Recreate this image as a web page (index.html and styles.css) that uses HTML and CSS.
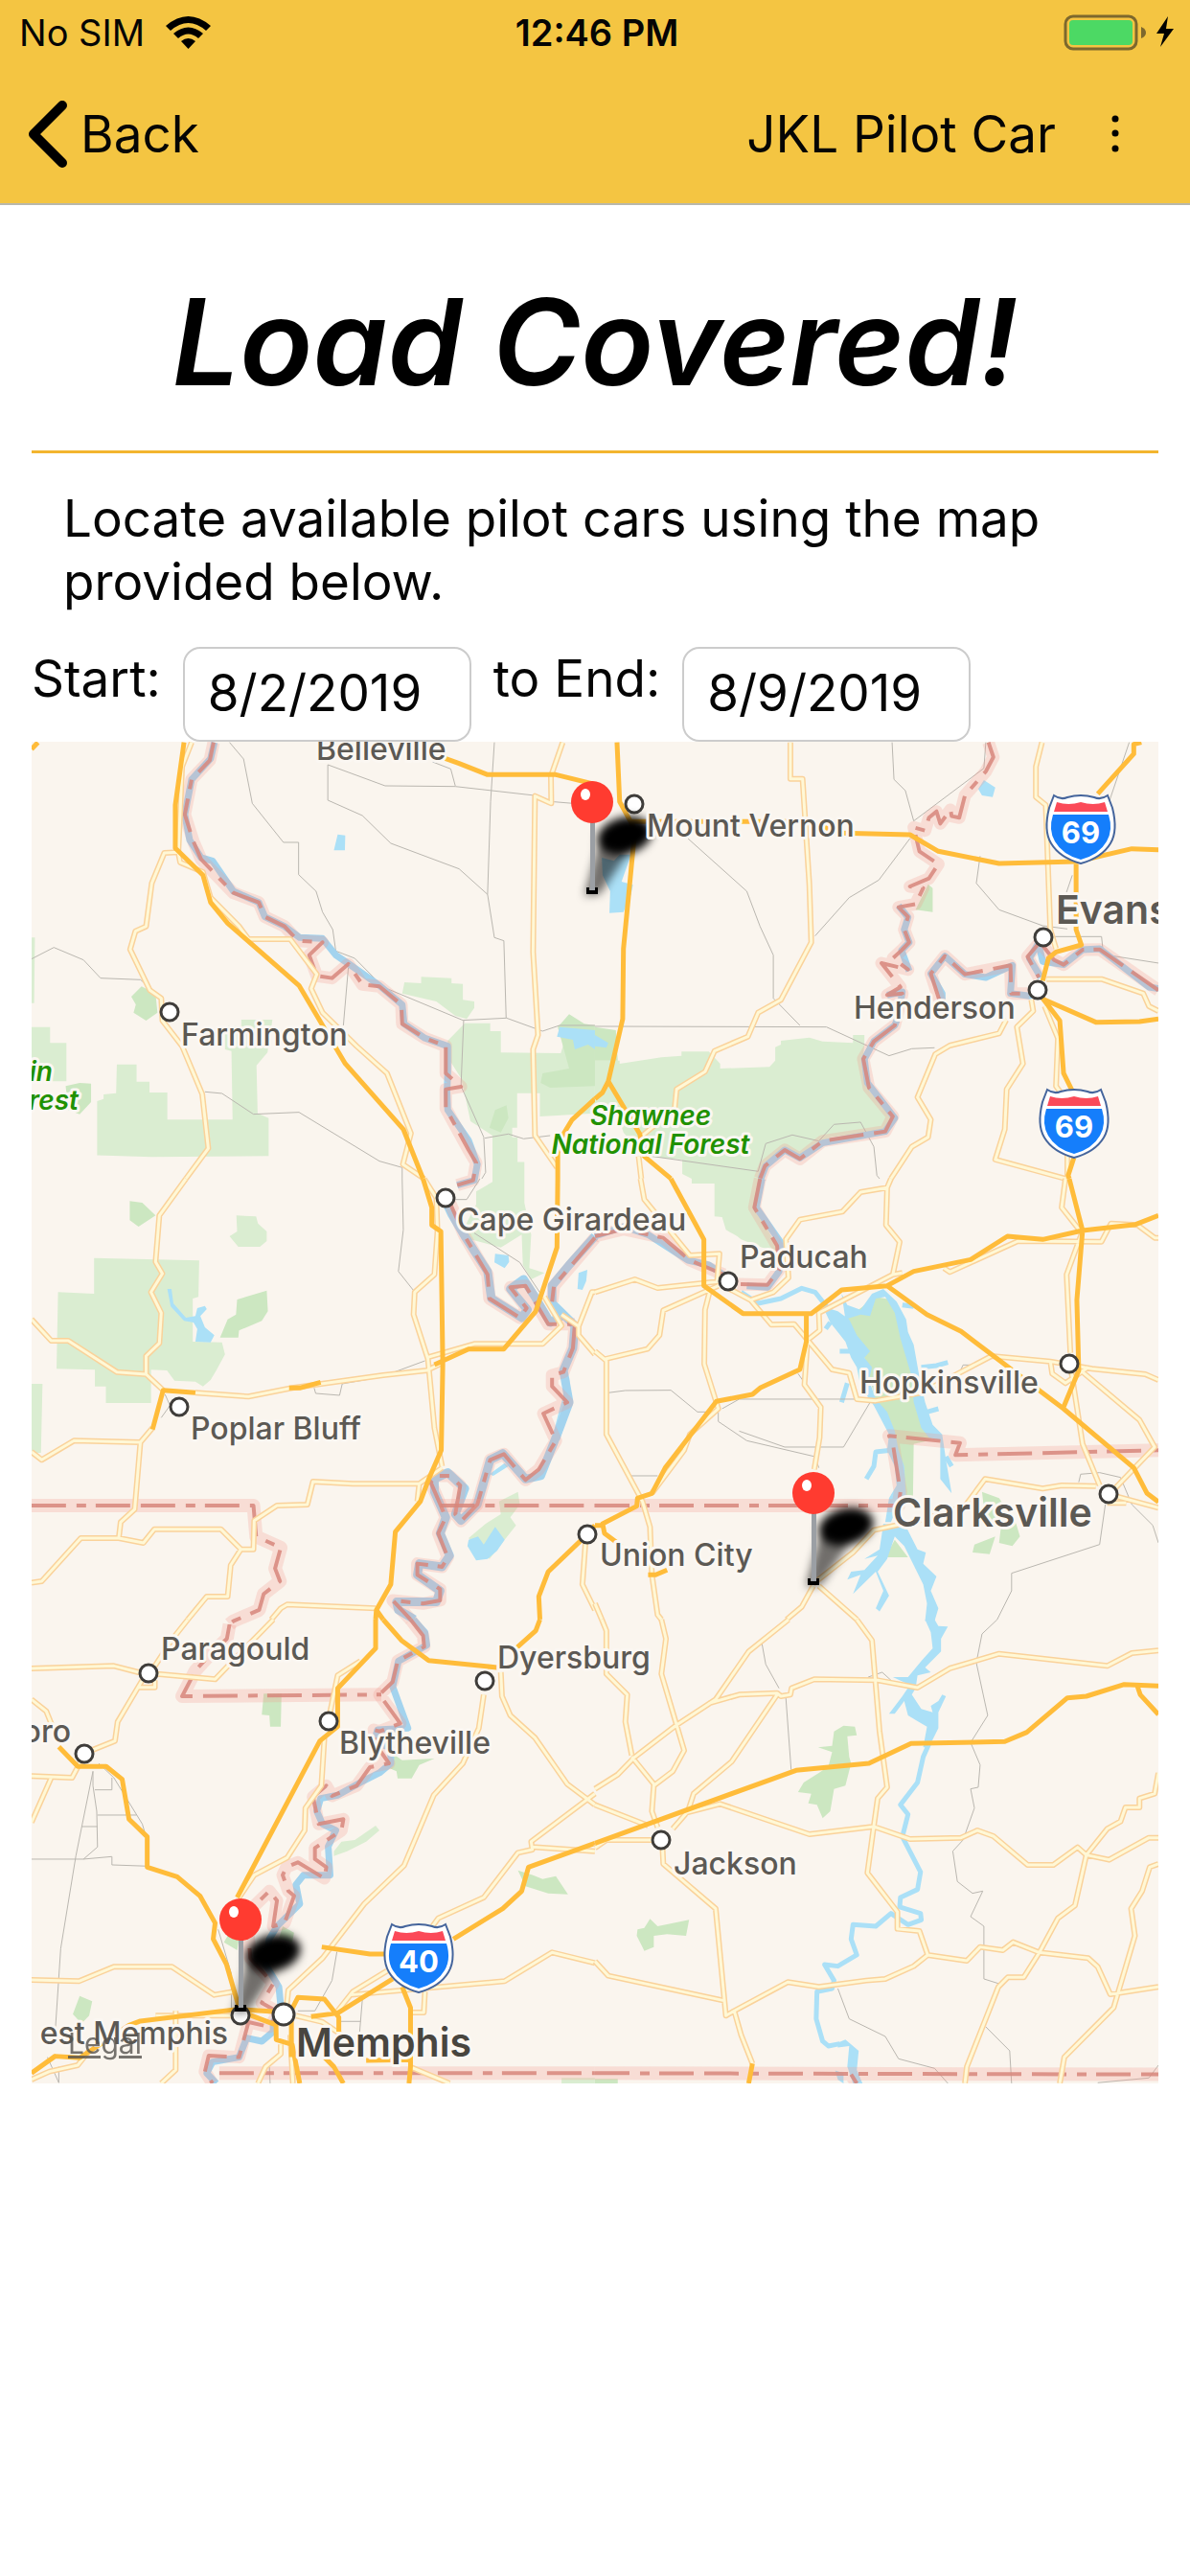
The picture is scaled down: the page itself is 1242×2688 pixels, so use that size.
FILE: index.html
```html
<!DOCTYPE html>
<html lang="en">
<head>
    <meta charset="UTF-8">
    <meta name="viewport" content="width=device-width, initial-scale=1.0">
    <title>JKL Pilot Car</title>
    <link rel="stylesheet" href="styles.css">
</head>
<body>
    <header class="app-header">
        <!-- Status bar -->
        <div class="status-bar">
            <div class="carrier">
                <span>No SIM</span>
                <svg class="wifi" viewBox="0 0 47 34" aria-hidden="true">
                    <path d="M0 10Q23.5 -10 47 10L42 15Q23.5 -1 5 15Z"/>
                    <path d="M8 18Q23.5 5 39 18L34 23Q23.5 14 13 23Z"/>
                    <path d="M16 26Q23.5 20 31 26L23.5 34Z"/>
                </svg>
            </div>
            <span class="time">12:46 PM</span>
            <svg class="battery" viewBox="0 0 116 38" aria-hidden="true">
                <rect class="battery-case" x="2" y="2" width="74" height="34" rx="8"/>
                <rect class="battery-level" x="6" y="6" width="66" height="26" rx="4"/>
                <path class="battery-tip" d="M81 13q5 2 5 6t-5 6z"/>
                <path d="M109 2L97 20h8l-4 14 14-19h-8z"/>
            </svg>
        </div>

        <!-- Navigation -->
        <nav class="nav-bar">
            <button type="button" class="back-button">
                <svg viewBox="0 0 41 70" aria-hidden="true"><path d="M36 5L6 35L36 65"/></svg>
                Back
            </button>
            <span class="nav-title">JKL Pilot Car</span>
            <button type="button" class="menu-button" aria-label="Menu">
                <svg viewBox="0 0 8 40" aria-hidden="true"><circle cx="4" cy="4" r="3.5"/><circle cx="4" cy="19" r="3.5"/><circle cx="4" cy="35" r="3.5"/></svg>
            </button>
        </nav>
    </header>

    <main>
        <h1>Load Covered!</h1>
        <hr>
        <p>Locate available pilot cars using the map provided below.</p>

        <form class="dates">
            <label for="startDate">Start:</label>
            <input type="text" id="startDate" value="8/2/2019">
            <label for="endDate">to End:</label>
            <input type="text" id="endDate" value="8/9/2019">
        </form>

        <div class="map">
            <svg viewBox="0 0 1176 1400" role="img" aria-label="Map of available pilot cars">
                <defs>
                    <filter id="soft" x="-60%" y="-60%" width="220%" height="220%">
                        <feGaussianBlur stdDeviation="5"/>
                    </filter>
                    <g id="shield">
                        <path class="shield-edge" d="M-28 -35Q-21 -30 -14 -33Q-7 -35 0 -35Q7 -35 14 -33Q21 -30 28 -35L33 -22Q39 2 31 15Q22 30 0 36Q-22 30 -31 15Q-39 2 -33 -22Z"/>
                        <path class="shield-red" d="M-25 -28Q-13 -24 0 -28Q13 -24 25 -28L28 -18H-28Z"/>
                        <path class="shield-blue" d="M-29 -15H29Q34 1 27 13Q19 27 0 32Q-19 27 -27 13Q-34 1 -29 -15Z"/>
                    </g>
                    <g id="pin">
                        <g filter="url(#soft)">
                            <ellipse cx="34" cy="-59" rx="29" ry="19" transform="rotate(-14 34 -59)"/>
                            <path d="M8 -55L38 -42L8 2L-8 4Z" opacity=".55"/>
                        </g>
                        <path class="pin-foot" d="M-6 -5h3v3h6v-3h3V2H-6z"/>
                        <rect class="pin-stem" x="-2" y="-74" width="5" height="72"/>
                        <circle class="pin-head" cy="-94" r="22"/>
                        <ellipse class="pin-shine" cx="-7" cy="-102" rx="5" ry="6"/>
                    </g>
                </defs>

                <!-- North west tile -->
                <g class="tile" transform="translate(-33 -4) scale(.396 .3333)">
                    <path class="park" d="M83 905H132V955H175V1075H83ZM83 625H92L90 830H83ZM308 1022H360V1076H394V1110H441V1195H613L610 980L593 975V900H636V882H718L705 985L676 1025L679 1175L708 1190V1309L400 1312L256 1307V1137L273 1130V1116L306 1112ZM1066 765L1110 768V748L1190 752V768L1220 770V820L1250 825V845L1230 880L1200 870L1150 825L1060 800ZM1225 893H1292V918H1320V985L1478 987L1490 940L1568 925V1175L1423 1185V1112H1363V1220H1350V1250H1364V1328H1382V1380H1298V1245L1240 1200L1225 1115L1215 1065L1180 1000V948Z"/>
                    <path class="wood" d="M373 778L410 800L415 860L385 885L352 860L358 835L346 810ZM173 1090L210 1080L240 1082V1140L210 1178L180 1165ZM1470 905L1500 865L1540 895L1568 900V1090L1450 1095L1425 1080L1430 1050L1500 1035ZM1305 1165L1335 1150L1340 1190L1320 1235L1290 1220Z"/>
                    <path class="lake" d="M890 302L910 305L909 352H880ZM1475 905L1568 915V975L1550 960L1515 975L1510 945L1468 935Z"/>
                    <path class="lane" d="M83 692L142 656L220 695L265 752L370 757L425 810M540 1108L585 1113L668 1178L788 1172L1000 1325L1060 1345V1380M605 14L642 66L665 205L747 327H787V428L833 480L850 545L877 600L885 667L935 690L1010 780L1220 884L1335 877L1430 918L1475 900H1568M1303 14L1293 200L1285 490L1303 625L1328 635L1334 877M1285 490L1210 410L1030 330L955 243L864 195V84L1015 150L1200 152L1408 180M1200 150L1188 97L1140 75M1460 200L1510 205M1222 884L1215 1090L1275 1250L1280 1360L1270 1380M1278 1253L1340 1240L1380 1255L1450 1245M918 720L905 900"/>
                    <path class="river" d="M565 14L555 65L505 130L487 240L500 320L530 375L560 385L615 480L682 515L698 560L750 590L790 625L850 628L885 680L920 708L1000 775L1060 835L1065 895L1120 940L1180 965V1050L1178 1110L1180 1165L1235 1260L1258 1335L1250 1385L1205 1400"/>
                    <g class="border-halo"><path id="border-nw" d="M563 14L553 70L505 130L487 240L510 325L530 380L550 405L615 485L682 515L698 560L750 590L785 635L850 640L815 680L835 745L875 752L918 708L955 772L1000 778L1058 835L1060 895L1120 940L1175 965V1050L1215 1092L1175 1100V1160L1235 1290L1255 1330L1247 1385L1205 1400"/></g>
                    <use class="border-dash" href="#border-nw"/>
                    <g class="road-edge"><path id="roads-nw" d="M505 14L480 90L470 360L475 390L535 420L555 500L630 590L655 630H765L835 740L820 785L850 860L940 965L1020 1050L1083 1238L1062 1335L1118 1380M470 358L433 360L400 455L385 590L357 605L343 662L395 790L425 815L428 885L480 965L533 1115L549 1285L490 1380M1483 14L1452 120L1453 205L1410 182L1405 670L1418 930L1405 975L1410 1245L1468 1345"/></g>
                    <use class="road-core" href="#roads-nw"/>
                    <path class="highway" d="M485 14L462 210V345L535 430L555 515L600 580L788 775L910 1020L1063 1225L1115 1380M83 35L100 14M1140 20L1175 65L1210 80L1285 115H1465L1568 145M1568 1130L1508 1195L1485 1240L1470 1300V1380"/>
                </g>

                <!-- North east tile -->
                <g class="tile" transform="translate(588 -4) scale(.396 .3333)">
                    <path class="park" d="M0 1010H65V1020L175 1000L228 995V982H300L330 1020V1035L460 1030L475 1010V968L490 960V948L565 938L600 950L680 955V930H710V960L705 1020L720 1100L780 1185L765 1230L620 1250L540 1310L500 1285L450 1335L435 1380H255L230 1365V1320L130 1310L75 1235L60 1180L0 1175Z"/>
                    <path class="wood" d="M0 905L55 915L60 1010H0ZM878 458L890 470V545L845 538Z"/>
                    <path class="lake" d="M18 375L50 385L65 365L95 365L70 450L100 460L95 490L75 545L38 548L40 480L20 430ZM1025 132L1055 155L1048 185L1020 180L1010 160ZM0 930L35 955L30 970L0 965Z"/>
                    <path class="lane" d="M783 14L788 130L818 165L840 260L1025 95L1030 14M830 315L748 445L670 500L580 620M245 315L400 480L435 590L470 680V815L540 900M0 903L610 905L775 995L835 973L895 970M1015 370L1005 455L1065 538L1180 588L1245 598M1408 14L1355 200M1258 430L1235 510M1200 622H1335L1340 678L1485 705M140 1308L430 1357L450 1270L520 1243L590 1262L630 1210L700 1203L735 1280L743 1370L750 1380"/>
                    <path class="river" d="M800 525L825 562L815 600L828 640L808 665L828 730M770 805L810 795L800 870L790 900L735 950L710 1005L718 1080L790 1190L765 1232L600 1268L540 1315L500 1290L450 1340L437 1380M915 830V800L885 738L922 683L975 740L1030 750L1100 712L1095 800L1145 808L1167 788M1170 640L1145 690L1175 750M1170 650L1180 700L1235 710L1285 663L1330 660L1460 780L1485 785"/>
                    <g class="border-halo"><path id="border-ne" d="M1037 14L1050 60L1030 105L975 180L960 250L940 245L937 225L910 268L900 230L880 250L870 290L840 280L855 355L905 395L880 440L830 465L865 470L845 520L800 530L825 560L815 600L828 640L808 665L785 690L825 725L755 705L805 780L770 805L810 800L790 900L735 950L707 1005L722 1095L785 1185L765 1232L600 1262L540 1318L500 1290L448 1340L435 1380M910 830L885 738L922 683L975 740L1095 712L1097 800L1145 800M1183 625L1140 685L1170 750M1180 650L1210 695L1235 710L1285 663L1330 662L1485 790"/></g>
                    <use class="border-dash" href="#border-ne"/>
                    <g class="road-edge"><path id="roads-ne" d="M515 14V128H547L565 460L570 640L490 820L430 860L403 935L315 980L290 1045L215 1100L210 1160L120 1250M1178 14L1162 90V185L1188 210L1200 600L1215 660M1190 755H1335L1445 800L1460 840L1485 855M1085 880L1065 925L935 963L897 990L850 1125L885 1195L878 1250L835 1280L780 1380M1150 820L1155 855L1112 905L1128 1020L1085 1100L1080 1225L1055 1320L1240 1380M1185 840L1220 940L1215 1090L1245 1140V1380M115 1310L122 1380"/></g>
                    <use class="road-core" href="#roads-ne"/>
                    <path class="highway" d="M58 14L65 200L95 265L105 290L75 660L73 880L35 1075L20 1110L0 1130M35 1075L118 1240L130 1310L200 1380M95 262H560L650 298L830 303L905 355L1065 393L1270 387L1415 347L1485 350M1440 14L1420 20V50L1325 175M1268 395V600L1282 648L1215 670L1195 690L1180 760M1185 820L1320 890L1435 888L1485 880M1170 800L1225 885L1235 1050L1258 1105M1262 1315L1247 1370L1250 1380"/>
                </g>

                <!-- West tile -->
                <g class="tile" transform="translate(-33 456) scale(.396 .3333)">
                    <path class="park" d="M248 248L525 256L523 370L508 375V510L585 512L593 550L570 600L555 630L535 650L515 635L460 632L440 600L398 598V702H279V650H250V598L149 595L153 355L248 360ZM623 115L675 118L680 140L703 165V195L685 213H628L605 180L625 165ZM83 642H112L108 858H83ZM1298 0H1382V75L1400 175L1395 280L1435 295L1400 315L1378 270L1375 175L1320 215L1240 190L1225 150L1255 80V40L1298 10ZM1365 980L1315 1010L1320 1050L1280 1080L1235 1125L1290 1190L1330 1130L1360 1085L1345 1060L1370 1020Z"/>
                    <path class="wood" d="M342 70L375 75L410 115L365 150L342 130ZM625 378L703 350L706 415L690 445L630 475L628 497H580L600 440L622 425Z"/>
                    <path class="lake" d="M441 345H452L457 390L490 435L515 430L520 405L540 398L545 408L528 430L540 465L565 490L555 512L515 510L520 470L510 450L485 445L450 400ZM1305 235L1340 240L1342 260L1330 280L1303 262ZM1525 295L1548 285L1545 320L1535 348L1522 345ZM1235 1130L1260 1120L1275 1145L1305 1090L1330 1130L1310 1165L1285 1190L1255 1195L1232 1150ZM1500 620L1505 700L1475 820L1460 790L1475 720ZM1290 925L1330 890L1340 900L1300 930Z"/>
                    <path class="lane" d="M1060 0L1063 160L1050 290L1090 350M1195 65H1230L1265 0M1250 170L1370 262L1425 360M1040 605L1120 570M828 655L832 672L895 678L902 642L970 628M435 675L448 710L425 748"/>
                    <path class="river wide" d="M1174 70L1190 110L1225 180L1285 290L1295 375L1375 435L1390 410L1345 345L1380 315L1410 370L1450 450L1480 430M1568 180L1500 270L1455 335V390L1515 460L1510 530L1485 600L1500 700L1475 780L1425 930L1385 940L1325 860L1292 880L1258 1020L1215 1070L1200 1050L1225 970L1180 920L1145 940V980L1175 1060L1160 1110L1185 1180L1165 1215L1105 1205L1100 1240L1160 1290L1150 1325L1045 1325L1050 1350L1092 1380"/>
                    <g class="border-halo"><path id="border-w" d="M1180 60L1225 180L1285 300L1290 375L1370 435L1388 405L1345 340L1385 335L1445 455L1515 455M1568 185L1460 335L1455 385M1515 455L1510 530L1485 605L1455 615V650L1495 700L1432 735L1465 820L1420 910L1385 943L1328 862L1292 880L1258 1020L1215 1072L1200 1050L1213 960L1185 930L1150 930L1135 950L1175 1060L1155 1110L1180 1185L1165 1215L1100 1205V1240L1160 1285V1320L1115 1330L1035 1320L1082 1380"/></g>
                    <use class="border-dash" href="#border-w"/>
                    <g class="state-halo"><path id="state-w" d="M83 1023H668L675 1120L740 1155L725 1220L738 1260L695 1300L683 1350L615 1385L605 1395M1160 1023H1568"/></g>
                    <use class="border-dash" href="#state-w"/>
                    <g class="road-edge"><path id="roads-w" d="M490 0L420 115L410 260L428 297L398 355L425 420L420 515L385 555V612L430 662M83 440L135 507H180L308 605L385 612M83 855L110 880L195 820L370 825L402 780M370 825L355 1035L318 1075L313 1125L378 1140L407 1097H582L635 1160H668L670 1070L730 1023L810 1020L825 948L930 955H1105L1165 905M635 1160L608 1210L600 1308H545L495 1380M83 1265L110 1260L213 1125H313M515 670L655 682L770 655L1010 615L1125 600L1160 580M1118 0L1150 60L1153 165L1145 300L1093 355L1090 425L1128 565L1145 780L1165 900M1125 560L1250 517H1430L1480 460L1435 370M1480 425L1525 462L1560 355H1568M1525 462V490L1568 550M715 1380L740 1345L757 1333L990 1345M1105 955L1100 1010M1543 1140L1535 1270L1568 1350"/></g>
                    <use class="road-core" href="#roads-w"/>
                    <path class="highway" d="M1115 0L1138 90V145L1162 165L1167 580L1163 850L1130 940L1108 1010L1042 1105L1030 1270L992 1350L990 1380M992 1350L1010 1380M1145 582L1235 533H1328L1412 415L1468 215L1470 0M402 785L430 662L515 670M762 655H790L845 637M1568 1085L1549 1112L1445 1230L1420 1308L1423 1380"/>
                </g>

                <!-- East tile -->
                <g class="tile" transform="translate(588 456) scale(.396 .3333)">
                    <path class="park" d="M255 0H435L420 90L480 210V225L440 215L385 190L375 180L345 160L335 120L315 118V15H255Z"/>
                    <path class="wood" d="M660 440L740 370L790 380L820 520L840 600L870 730L900 800L880 820L840 830L838 1005H815L790 800L740 700L720 600L700 520ZM1020 980L1065 1000L1110 1080L1120 1120L1100 1150L1065 1140L1070 1090L1030 1080ZM1055 1120L1040 1175L995 1170L1000 1145ZM790 1130L825 1185H765Z"/>
                    <path class="lake" d="M600 400L640 415L670 440L690 490L725 540L710 560L730 590L722 630L740 690L770 730L790 790L800 850L815 900L820 1000L800 1020L780 1075H765L775 1000L795 960L790 900L770 850L775 800L735 710L700 650L690 590L675 560L660 510L620 450ZM650 360L665 395L700 410L730 360L760 345L795 385L820 440L825 480L840 520L855 620L870 700L890 770L915 800L925 880L940 985L910 940V820L880 810L860 780L840 700L835 620L820 560L805 500L790 420L765 370L740 375L725 430L700 425L660 440ZM760 1080L820 1090L850 1160L872 1170L865 1205L900 1245L885 1290L905 1345L895 1385H870L875 1330L865 1270L840 1210L815 1150L790 1120L770 1190L745 1230L775 1305L750 1355L740 1345L760 1290L740 1230L680 1300L700 1240L665 1255L675 1230L710 1225L745 1180L710 1190L750 1160Z"/>
                    <path class="creek" d="M385 355L430 390L490 375L545 343L580 355L610 400M810 395L840 400M860 590L900 585L930 575M875 730L905 720M780 850L740 855L735 900L715 940M665 640L650 700M680 540H645M620 450L608 470M925 870L940 900"/>
                    <path class="lane" d="M35 670L80 663L200 662L270 730H325M550 635L535 610M335 720L380 690H690M325 730V760L400 820L580 870L590 905M380 790L500 840H655L725 700M95 930H165M960 610L970 583H990M1275 950L1280 925L1330 920L1385 935L1415 1020L1470 1085L1485 1140M1345 1020L1330 1145L1098 1235V1290L1060 1380"/>
                    <path class="river" d="M440 0L425 90L490 200L485 290L455 340L400 335M0 180L75 150L140 175L245 255L300 270L350 310"/>
                    <g class="border-halo"><path id="border-e" d="M435 0L420 90L480 210L485 285L455 332L375 330M0 180L75 158L180 185L250 255L340 300"/></g>
                    <use class="border-dash" href="#border-e"/>
                    <g class="state-halo"><path id="state-e" d="M0 1023H800L805 980L785 830L775 805L962 827L950 865L1485 850"/></g>
                    <use class="border-dash" href="#state-e"/>
                    <g class="road-edge"><path id="roads-e" d="M0 355L105 315L165 342L325 322M0 540L30 570V800L125 1010L145 1090L150 1240L165 1365L175 1380M25 565L138 533L170 490L180 412L325 335M305 340L290 410L288 580L325 720L250 800L235 850L150 985M120 0L130 65L250 240L328 235L322 320M355 345L410 380L465 457L525 455L625 597L670 608L690 690L740 695L860 670L1045 555L1200 572L1310 595L1450 612L1485 630M410 380L470 355L510 310L503 190L540 128L652 103L700 42L770 28L780 0M770 28L767 145L803 198L785 300L590 420L592 475L560 505L552 645L595 715L592 810L578 910M785 300L810 295M920 280L935 292L1115 195L1335 197L1360 140L1430 145L1475 185H1485M1240 0L1230 90L1283 170L1243 300L1253 545M1255 600L1285 830L1330 960M1200 570L1205 610L1240 640L1300 590M1280 600L1435 755L1475 840L1370 970M975 1025L1028 940L1180 970L1230 960L1320 962M1350 1015H1400M1360 990L1485 1030M575 1268L680 1170L735 1100L870 1065L975 1025M575 1275L545 1340L505 1380M590 1275L690 1380M0 1330L18 1380"/></g>
                    <use class="road-core" href="#roads-e"/>
                    <path class="highway" d="M200 0L287 190V335L390 422H570L650 348L770 335L840 290L990 253L1087 180L1180 190L1285 162L1425 143L1485 115M1250 0L1285 162L1270 380L1275 600L1235 715M770 335L875 425L965 478L1235 720L1420 905L1455 985L1485 1012M557 422V510L540 597L435 655L415 675L320 697L185 905L150 985L112 1000L110 1025L20 1080L25 1110L70 1150M0 1085H20M140 1240H160L190 1225"/>
                </g>

                <!-- South west tile -->
                <g class="tile" transform="translate(-33 916) scale(.396 .3333)">
                    <path class="park" d="M880 725L900 695L935 690L990 645L1000 660L965 695L915 725L880 740ZM1480 1435H1568V1452H1480Z"/>
                    <path class="wood" d="M695 232H742L740 335H712L710 300L690 298ZM1035 420L1060 440L1145 435L1105 455L1085 497H1048L1045 475L1020 462ZM1365 785L1405 800L1430 812L1465 803L1497 860L1445 857L1385 835ZM210 1178L243 1195L235 1240L215 1265L192 1235ZM600 990L630 1000L625 1035L590 1010ZM745 960L775 980L770 1010L735 1000Z"/>
                    <path class="lane" d="M245 475L200 740L160 1030L145 1300M245 475V520L255 600L257 712L220 750M83 750H220L295 742V768L390 772M257 612H360M215 648H257M250 533H295V495M260 450L300 495L375 640L385 680M888 1040L875 1130L830 1225H785M955 1190L948 1290M890 1258H950M575 970L610 1110V1215M125 1370L155 1450V1400M710 1400L712 1452"/>
                    <path class="river" d="M1090 0L1120 40L1125 80L1050 130L1035 210L1075 340L995 345L985 385L1030 400V450L1000 480L950 510L890 550L845 560L835 600L850 640L885 660L865 710L870 800H800L780 830L790 890L730 960L710 1000L700 1080L735 1150L740 1210L720 1260V1290L690 1320L650 1310L630 1370L560 1385L545 1420L570 1452"/>
                    <g class="border-halo"><path id="border-sw" d="M1082 0L1115 50L1118 85L1048 130L1035 195L1000 235L1055 325L1000 350L985 345L990 390L1025 450L975 462L940 520L875 552L860 520L825 555L840 640L905 625L900 660L830 715V750L860 775L855 810L785 760L755 775L745 800L760 850L775 865L750 950L720 960L730 880L710 850L650 920L660 1060L720 1140L690 1200L735 1230L710 1275L655 1260L630 1370L550 1365L540 1415L560 1452"/></g>
                    <use class="border-dash" href="#border-sw"/>
                    <g class="state-halo"><path id="state-sw" d="M605 15L598 60L545 120L515 160L480 240L1005 235M578 1420H1568"/></g>
                    <use class="border-dash" href="#state-sw"/>
                    <g class="road-edge"><path id="roads-sw" d="M495 0L455 60L400 160M720 0L605 140L567 187L365 165L300 145L83 153M83 250L122 287L140 340M375 190L310 320L303 380L240 410L210 450L190 495L83 490M135 495L83 635M365 212H408V190M950 130L890 175L870 290M855 370L847 520L805 590L803 660L757 745L670 800L630 870M1275 235L1262 340L1220 450L1143 550L1065 770L960 890L850 1060L760 1160L755 1215M1320 165L1323 240L1345 300L1410 370L1495 515L1568 580M1568 545L1400 695L1403 720L1365 730L1275 870L1155 935L1140 960M1403 712L1568 725M83 1128L208 1132L300 1087H453L565 1175L615 1165M1020 1100L930 1165L890 1225M925 1175L1330 1132L1455 1042L1568 1075M1120 1165L1117 1230H1085M83 1440L130 1415L205 1395L235 1350M463 1225V1410L425 1452M410 1240H615M740 1330V1360L700 1400L680 1452M765 1300L772 1452M780 1240L850 1260L900 1300M1080 1400L1185 1452"/></g>
                    <use class="road-core" href="#roads-sw"/>
                    <path class="highway" d="M990 0V90L890 215V335L843 380L625 870M1010 0L1058 65L1130 128L1310 150M1423 0L1412 35L1360 90M155 398L205 460H280L322 500L340 625L388 680V775L467 805L527 865L567 950L562 1000L597 1080L630 1215M83 1420L145 1367L210 1372L340 1270L370 1257L625 1220L730 1228M630 1225L730 1270M727 1235L728 1315L770 1330L790 1452M768 1250V1370M765 1230L785 1183L855 1188L893 1245V1290M820 1243L890 1232L1035 1125M848 1025L975 1047H1015M1195 1000L1325 905L1375 850L1393 775L1568 700M1060 1150L1082 1215V1400L1078 1452M855 1370L880 1400L905 1452M965 1380L1080 1378"/>
                </g>

                <!-- South east tile -->
                <g class="tile" transform="translate(588 916) scale(.396 .3333)">
                    <path class="wood" d="M655 332L685 335L690 362L665 365L670 430L675 450L660 520L630 530L620 600L600 622L585 580L562 575L570 545L535 540L550 510L590 480L615 460L625 415L588 400L625 395L630 350ZM145 937L165 960L248 940L240 990L190 985L155 990V1025L130 1037L110 990L112 970L130 965ZM0 1438H60V1452H0Z"/>
                    <path class="lake" d="M870 0H895L905 20L930 22L912 60V100L870 150L885 165L850 175L845 215L835 235L860 280L890 290L885 270L905 255L915 235L925 240L905 290V340L880 400H865L875 335L850 318L825 300L815 255L790 295H775L810 240L830 205L785 180H825L860 130L890 90L885 40ZM640 1325L660 1315L695 1350L690 1410L705 1452H680L665 1400L670 1335L640 1340ZM633 1412L655 1420V1452L640 1440Z"/>
                    <path class="creek" d="M880 390L865 430L850 510L805 580L825 610L810 680L858 790L850 845L805 870L803 900L858 920L860 940L825 955L780 920L740 960L680 955L675 1000L690 1050L640 1085L605 1080L630 1130L625 1155L585 1165L583 1250L600 1320L615 1335L645 1328"/>
                    <path class="lane" d="M1060 0L1020 45L1005 135L1035 300L990 385L1015 455L1010 525L990 530L1000 590L970 690L943 725L955 820L995 857L1022 850L990 930L1025 960V1125L1065 1140M640 1155L670 1250L765 1305L800 1375L895 1405L930 1452M1030 1275L1093 1350L1098 1452M1325 1450L1460 1435L1485 1395M440 75L450 140L485 215M503 245L517 470M720 180L757 165L780 190"/>
                    <g class="state-halo"><path id="state-se" d="M0 1420L1485 1424M675 1424L690 1452"/></g>
                    <use class="border-dash" href="#state-se"/>
                    <g class="road-edge"><path id="roads-se" d="M18 0L30 35V170L85 235L80 320L97 425M175 0L187 60L175 170L235 410L205 475L155 520L150 600L165 650M510 0L405 100L318 250L215 330L105 430L60 485L0 530M300 262L380 235L480 230L490 240L515 235L518 215L578 187L745 190L850 213L935 153L1065 107L1350 145L1415 105L1485 97M480 235L360 445L260 545L245 600L205 655M97 430L155 515M690 0L730 65L750 350L770 525L745 560L735 645L718 793L797 915V968L855 975L877 1050M0 580L140 645M30 690H160M240 605L330 577L565 672L735 648L830 687L965 683L1008 660L1050 678L1140 768H1208L1272 713L1295 737L1355 752L1460 683H1485M1485 480L1475 545L1435 560V588H1398L1385 632L1350 655L1295 737L1265 895L1220 935L1170 1045L1130 1120H1088L1063 1150L980 1400L975 1452M178 715L180 765L318 905L345 1240L367 1225L508 1135L590 1150L715 1130L765 1125L840 1085L877 1050L980 1068L1015 1025L1075 1035L1102 1010L1170 1042L1300 1060L1325 1087L1358 1173L1485 1150M0 1070L35 1115L340 1193M367 1225L385 1300L415 1390M1485 765L1462 775L1442 850L1413 905L1423 990L1367 1215L1237 1370L1225 1452M0 715L30 690"/></g>
                    <use class="road-core" href="#roads-se"/>
                    <path class="highway" d="M0 700L530 472L722 450L833 388L1080 382L1138 353L1245 245L1295 240L1395 203L1485 208M1430 210L1437 235L1485 297M415 1390L405 1452"/>
                </g>

                <!-- Interstate shields -->
                <use href="#shield" x="1095" y="91"/>
                <use href="#shield" x="1088" y="398"/>
                <use href="#shield" x="404" y="1269"/>
                <g class="shield-number">
                    <text x="1095" y="106">69</text>
                    <text x="1088" y="413">69</text>
                    <text x="404" y="1284">40</text>
                </g>

                <!-- Towns -->
                <g class="town">
                    <circle cx="629" cy="65" r="9"/>
                    <circle cx="144" cy="282" r="9"/>
                    <circle cx="1056" cy="204" r="9"/>
                    <circle cx="1050" cy="259" r="9"/>
                    <circle cx="432" cy="476" r="9"/>
                    <circle cx="727" cy="563" r="9"/>
                    <circle cx="154" cy="694" r="9"/>
                    <circle cx="1083" cy="649" r="9"/>
                    <circle cx="1124" cy="785" r="9"/>
                    <circle cx="580" cy="827" r="9"/>
                    <circle cx="122" cy="972" r="9"/>
                    <circle cx="473" cy="980" r="9"/>
                    <circle cx="55" cy="1056" r="9"/>
                    <circle cx="310" cy="1022" r="9"/>
                    <circle cx="657" cy="1146" r="9"/>
                    <circle cx="218" cy="1329" r="9"/>
                    <circle cx="263" cy="1328" r="11"/>
                </g>

                <!-- Pilot cars -->
                <use href="#pin" x="585" y="157"/>
                <use href="#pin" x="816" y="878"/>
                <use href="#pin" x="218" y="1323"/>

                <g class="place">
                    <text x="297" y="19">Belleville</text>
                    <text x="642" y="99">Mount Vernon</text>
                    <text x="156" y="317">Farmington</text>
                    <text x="858" y="289">Henderson</text>
                    <text x="444" y="510">Cape Girardeau</text>
                    <text x="739" y="549">Paducah</text>
                    <text x="166" y="728">Poplar Bluff</text>
                    <text x="864" y="680">Hopkinsville</text>
                    <text x="593" y="860">Union City</text>
                    <text x="135" y="958">Paragould</text>
                    <text x="486" y="967">Dyersburg</text>
                    <text class="ends-at" x="41" y="1044">oro</text>
                    <text x="321" y="1056">Blytheville</text>
                    <text x="670" y="1182">Jackson</text>
                    <text class="ends-at" x="205" y="1359">est Memphis</text>
                    <text class="large" x="1069" y="190">Evans</text>
                    <text class="large" x="899" y="819">Clarksville</text>
                    <text class="large capital" x="276" y="1372">Memphis</text>
                </g>
                <g class="forest">
                    <text x="646" y="400">Shawnee</text>
                    <text x="646" y="430">National Forest</text>
                    <text class="ends-at" x="22" y="354">in</text>
                    <text class="ends-at" x="49" y="384">rest</text>
                </g>
            </svg>
            <a class="legal" href="#">Legal</a>
        </div>
    </main>
</body>
</html>
```

FILE: styles.css
```css
/* General Styles */
* {
    box-sizing: border-box;
}

body {
    margin: 0;
    background-color: #fff;
    color: #050505;
    font-family: Inter, "Liberation Sans", sans-serif;
    font-size: 53px;
    line-height: 66px;
}

button,
input {
    font: inherit;
    color: inherit;
}

button {
    padding: 0;
    border: none;
    background: none;
    cursor: pointer;
}

/* Header */
.app-header {
    background-color: #f4c542;
    border-bottom: 2px solid #b9b8ac;
}

.status-bar {
    display: grid;
    grid-template-columns: 1fr auto 1fr;
    align-items: center;
    height: 68px;
    padding: 0 16px 0 20px;
    font-size: 38px;
}

.carrier {
    display: flex;
    align-items: center;
    gap: 22px;
}

.wifi {
    width: 47px;
    height: 34px;
}

.time {
    font-weight: 600;
}

.battery {
    justify-self: end;
    width: 116px;
    height: 38px;
}

.battery-case {
    fill: none;
    stroke: #7d682d;
    stroke-width: 3;
}

.battery-level {
    fill: #4cd964;
}

.battery-tip {
    fill: #7d682d;
}

.nav-bar {
    display: flex;
    align-items: center;
    height: 144px;
    padding: 0 74px 0 29px;
}

.back-button {
    display: flex;
    align-items: center;
    gap: 14px;
}

.back-button svg {
    width: 41px;
    height: 70px;
    fill: none;
    stroke: #000;
    stroke-width: 10;
    stroke-linecap: round;
    stroke-linejoin: round;
}

.nav-title {
    margin-left: auto;
}

.menu-button {
    display: flex;
    margin-left: 58px;
}

.menu-button svg {
    width: 8px;
    height: 40px;
}

/* Content */
main {
    padding: 66px 33px;
}

h1 {
    margin: 0 0 36px;
    font-size: 125px;
    font-style: italic;
    font-weight: 600;
    line-height: 154px;
    text-align: center;
    color: #000;
}

hr {
    height: 3px;
    margin: 0;
    border: none;
    background-color: #f3b52f;
}

p {
    margin: 35px 33px;
}

.dates {
    display: flex;
    align-items: flex-start;
    gap: 23px;
}

.dates input {
    width: 301px;
    height: 99px;
    padding: 0 24px 4px;
    border: 2px solid #ccc;
    border-radius: 18px;
    background-color: #fff;
}

/* Map */
.map {
    position: relative;
}

.map svg {
    display: block;
    width: 100%;
    background-color: #faf5ee;
    overflow: hidden;
}

.tile path {
    vector-effect: non-scaling-stroke;
    stroke-linejoin: round;
}

.park {
    fill: #daedd1;
}

.wood {
    fill: #cce7c1;
}

.lake {
    fill: #abe0f7;
}

.lane,
.river,
.creek,
.highway,
.road-edge,
.road-core,
.border-halo,
.state-halo,
.border-dash {
    fill: none;
}

.lane {
    stroke: #bab7b0;
    stroke-width: 1;
}

.river {
    stroke: #a3d3ee;
    stroke-width: 7;
}

.river.wide {
    stroke-width: 9;
}

.creek {
    stroke: #abe0f7;
    stroke-width: 5;
}

.highway {
    stroke: #ffbc3a;
    stroke-width: 5;
}

.road-edge {
    stroke: #fad29a;
    stroke-width: 6;
}

.road-core {
    stroke: #fff8d6;
    stroke-width: 3;
}

.border-halo {
    stroke: rgba(245, 150, 140, 0.25);
    stroke-width: 13;
}

.state-halo {
    stroke: rgba(245, 150, 140, 0.25);
    stroke-width: 14;
}

.border-dash {
    stroke: #d8877c;
    stroke-width: 4;
    stroke-dasharray: 36 11 10 10 36 11;
    opacity: 0.85;
}

.town {
    fill: #fff;
    stroke: #3f3d3a;
    stroke-width: 3;
}

.place,
.forest {
    stroke: #fbf7f2;
    stroke-width: 6;
    stroke-linejoin: round;
    paint-order: stroke;
}

.place {
    fill: #5c5954;
    font-size: 32px;
    font-weight: 500;
}

.place .large {
    font-size: 41px;
    font-weight: 600;
}

.place .capital {
    fill: #48453f;
}

.forest {
    fill: #219100;
    font-size: 28px;
    font-style: italic;
    font-weight: 600;
    text-anchor: middle;
}

.place .ends-at,
.forest .ends-at {
    text-anchor: end;
}

/* Interstate shields */
.shield-edge {
    fill: #fff;
    stroke: #45659c;
    stroke-width: 2;
}

.shield-red {
    fill: #fb4a59;
}

.shield-blue {
    fill: #157efb;
}

.shield-number {
    fill: #fff;
    font-size: 31px;
    font-weight: 700;
    text-anchor: middle;
}

/* Pins */
.pin-head {
    fill: #ff3b30;
}

.pin-stem {
    fill: #9b9fa4;
}

.pin-shine {
    fill: #fff;
}

.legal {
    position: absolute;
    bottom: 24px;
    left: 38px;
    color: #55524e;
    font-size: 30px;
    line-height: 36px;
    opacity: 0.8;
}
```
